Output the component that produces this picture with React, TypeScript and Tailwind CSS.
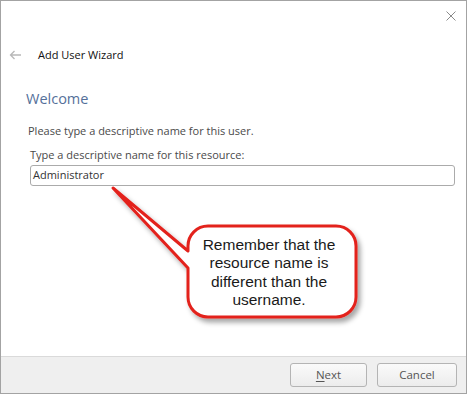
import React from "react";

const ui = { fontFamily: '"Open Sans", "Noto Sans", sans-serif' };
const arial = { fontFamily: '"Liberation Sans", Arial, sans-serif' };

// bubble geometry (px, window coordinates)
const L = 188;
const R = 356;
const T = 226;
const B = 317;
const RAD = 20;
const calloutPath = [
  `M ${L + RAD} ${T}`,
  `L ${R - RAD} ${T}`,
  `A ${RAD} ${RAD} 0 0 1 ${R} ${T + RAD}`,
  `L ${R} ${B - RAD}`,
  `A ${RAD} ${RAD} 0 0 1 ${R - RAD} ${B}`,
  `L ${L + RAD} ${B}`,
  `A ${RAD} ${RAD} 0 0 1 ${L} ${B - RAD}`,
  `L ${L} 268`,
  `L 113 188`,
  `L ${L} 251`,
  `L ${L} ${T + RAD}`,
  `A ${RAD} ${RAD} 0 0 1 ${L + RAD} ${T}`,
  "Z",
].join(" ");

const Callout: React.FC = () => {
  return (
    <>
      <svg
        className="absolute left-0 top-0 pointer-events-none"
        width={467}
        height={395}
        viewBox="0 0 467 395"
      >
        <defs>
          <filter id="shadow" x="-20%" y="-20%" width="140%" height="150%">
            <feDropShadow dx="3" dy="4" stdDeviation="2.5" floodColor="#000" floodOpacity="0.35" />
          </filter>
        </defs>
        <path
          d={calloutPath}
          fill="#ffffff"
          stroke="#e3211c"
          strokeWidth={3}
          strokeLinejoin="round"
          filter="url(#shadow)"
        />
      </svg>
      <div
        className="absolute left-[185px] top-[236px] w-[168px] text-center text-[15.5px] leading-[18.3px] text-[#1a1a1a]"
        style={arial}
      >
        Remember that the
        <br />
        resource name is
        <br />
        different than the
        <br />
        username.
      </div>
    </>
  );
};

export default function App() {
  return (
    <div className="relative w-[467px] h-[395px] bg-white" style={ui}>
      <div className="flex flex-col w-[467px] h-[394px] border border-[#a3a3a3] bg-white">
        {/* close */}
        <div className="flex justify-end h-[30px] pr-[10px] pt-[10px]">
          <svg width="10" height="10" viewBox="0 0 10 10">
            <path d="M0.5 0.5 L9.5 9.5 M9.5 0.5 L0.5 9.5" stroke="#8a8a8a" strokeWidth="1" />
          </svg>
        </div>

        {/* header */}
        <div className="flex items-center h-[20px] mt-[14px] pl-[8px]">
          <svg width="13" height="10" viewBox="0 0 13 10">
            <path d="M12 5 H1.5 M5.5 1 L1.5 5 L5.5 9" stroke="#b8b8b8" strokeWidth="1.3" fill="none" />
          </svg>
          <span className="ml-[16px] text-[11px] text-[#111]">Add User Wizard</span>
        </div>

        {/* body */}
        <div className="flex flex-col flex-1 pl-[25px] pr-[11px]">
          <div className="mt-[24px] text-[14.5px] leading-[20px] text-[#55709a]">Welcome</div>
          <div className="mt-[14px] pl-[2px] text-[11px] leading-[16px] text-[#4a4a4a]">
            Please type a descriptive name for this user.
          </div>
          <div className="mt-[8px] pl-[4px] text-[11px] leading-[16px] text-[#4a4a4a]">
            Type a descriptive name for this resource:
          </div>
          <div className="mt-[2px] ml-[4px] h-[21px] flex items-center rounded-[3px] border border-[#ababab] px-[2px] text-[11px] text-[#333]">
            Administrator
          </div>
        </div>

        {/* footer */}
        <div className="flex justify-end items-center gap-[10px] h-[37px] border-t border-[#dadada] bg-[#efefef] pr-[9px]">
          <button className="w-[77px] h-[24px] rounded-[3px] border border-[#b4b4b4] bg-gradient-to-b from-[#fafafa] to-[#ececec] text-[11.5px] text-[#555]">
            <span className="underline underline-offset-2">N</span>ext
          </button>
          <button className="w-[80px] h-[24px] rounded-[3px] border border-[#b4b4b4] bg-gradient-to-b from-[#fafafa] to-[#ececec] text-[11.5px] text-[#555]">
            Cancel
          </button>
        </div>
      </div>
      <Callout />
    </div>
  );
}
